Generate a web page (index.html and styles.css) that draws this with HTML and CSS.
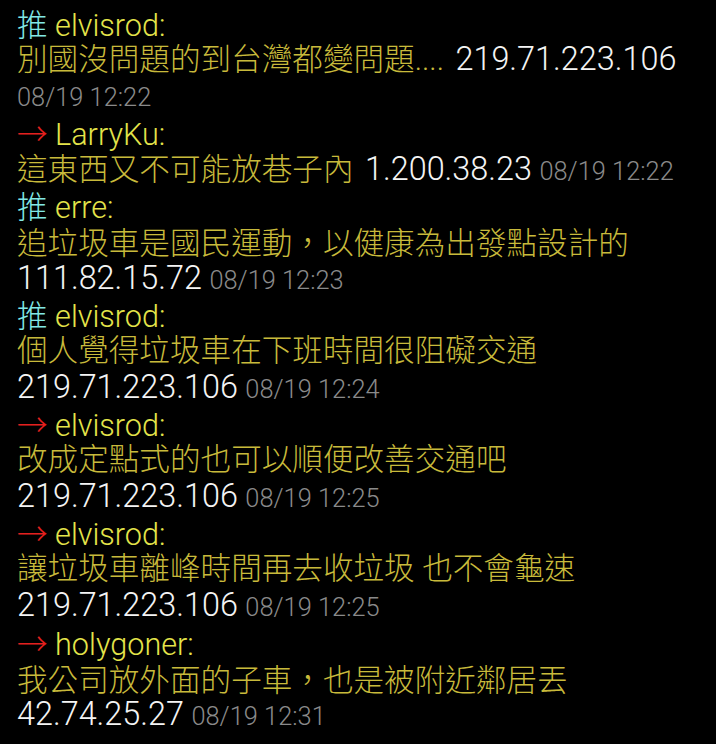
FILE: index.html
```html
<!DOCTYPE html>
<html lang="zh-Hant">
<head>
<meta charset="utf-8">
<title>推文</title>
<link rel="stylesheet" href="styles.css">
</head>
<body>
<div class="thread">
  <div class="push">
    <div class="line"><span class="tag up">推</span> <span class="user">elvisrod:</span></div>
    <div class="line"><span class="text">別國沒問題的到台灣都變問題....</span> <span class="ip">219.71.223.106</span></div>
    <div class="line"><span class="time">08/19 12:22</span></div>
  </div>
  <div class="push">
    <div class="line"><span class="tag arrow">→</span> <span class="user">LarryKu:</span></div>
    <div class="line"><span class="text">這東西又不可能放巷子內</span> <span class="ip">1.200.38.23</span> <span class="time">08/19 12:22</span></div>
  </div>
  <div class="push">
    <div class="line"><span class="tag up">推</span> <span class="user">erre:</span></div>
    <div class="line"><span class="text">追垃圾車是國民運動<span class="punct">，</span>以健康為出發點設計的</span></div>
    <div class="line"><span class="ip">111.82.15.72</span> <span class="time">08/19 12:23</span></div>
  </div>
  <div class="push">
    <div class="line"><span class="tag up">推</span> <span class="user">elvisrod:</span></div>
    <div class="line"><span class="text">個人覺得垃圾車在下班時間很阻礙交通</span></div>
    <div class="line"><span class="ip">219.71.223.106</span> <span class="time">08/19 12:24</span></div>
  </div>
  <div class="push">
    <div class="line"><span class="tag arrow">→</span> <span class="user">elvisrod:</span></div>
    <div class="line"><span class="text">改成定點式的也可以順便改善交通吧</span></div>
    <div class="line"><span class="ip">219.71.223.106</span> <span class="time">08/19 12:25</span></div>
  </div>
  <div class="push">
    <div class="line"><span class="tag arrow">→</span> <span class="user">elvisrod:</span></div>
    <div class="line"><span class="text">讓垃圾車離峰時間再去收垃圾 也不會龜速</span></div>
    <div class="line"><span class="ip">219.71.223.106</span> <span class="time">08/19 12:25</span></div>
  </div>
  <div class="push">
    <div class="line"><span class="tag arrow">→</span> <span class="user">holygoner:</span></div>
    <div class="line"><span class="text">我公司放外面的子車<span class="punct">，</span>也是被附近鄰居丟</span></div>
    <div class="line"><span class="ip">42.74.25.27</span> <span class="time">08/19 12:31</span></div>
  </div>
</div>
</body>
</html>
```

FILE: styles.css
```css
html, body {
  margin: 0;
  padding: 0;
  background: #000;
}

body {
  width: 716px;
  height: 744px;
  overflow: hidden;
  font-family: "Roboto", "Noto Sans CJK TC", sans-serif;
  font-weight: 300;
  font-size: 30.6px;
}

.thread {
  display: flex;
  flex-direction: column;
  padding: 5px 0 0 17px;
}

.line {
  height: 36.4px;
  line-height: 36.4px;
  white-space: nowrap;
}

.tag {
  font-family: "Noto Sans CJK TC", sans-serif;
}

.up {
  color: #82e8e6;
}

.arrow {
  color: #e3201f;
}

.user {
  color: #e4e44a;
}

.text {
  color: #c8ba3b;
}

.punct {
  font-family: "Noto Sans CJK JP", sans-serif;
}

.ip {
  color: #f4f4f4;
  font-size: 32.4px;
}

.text + .ip {
  margin-left: 4px;
}

.time {
  color: #8a8a8a;
  font-size: 25.4px;
}
```
